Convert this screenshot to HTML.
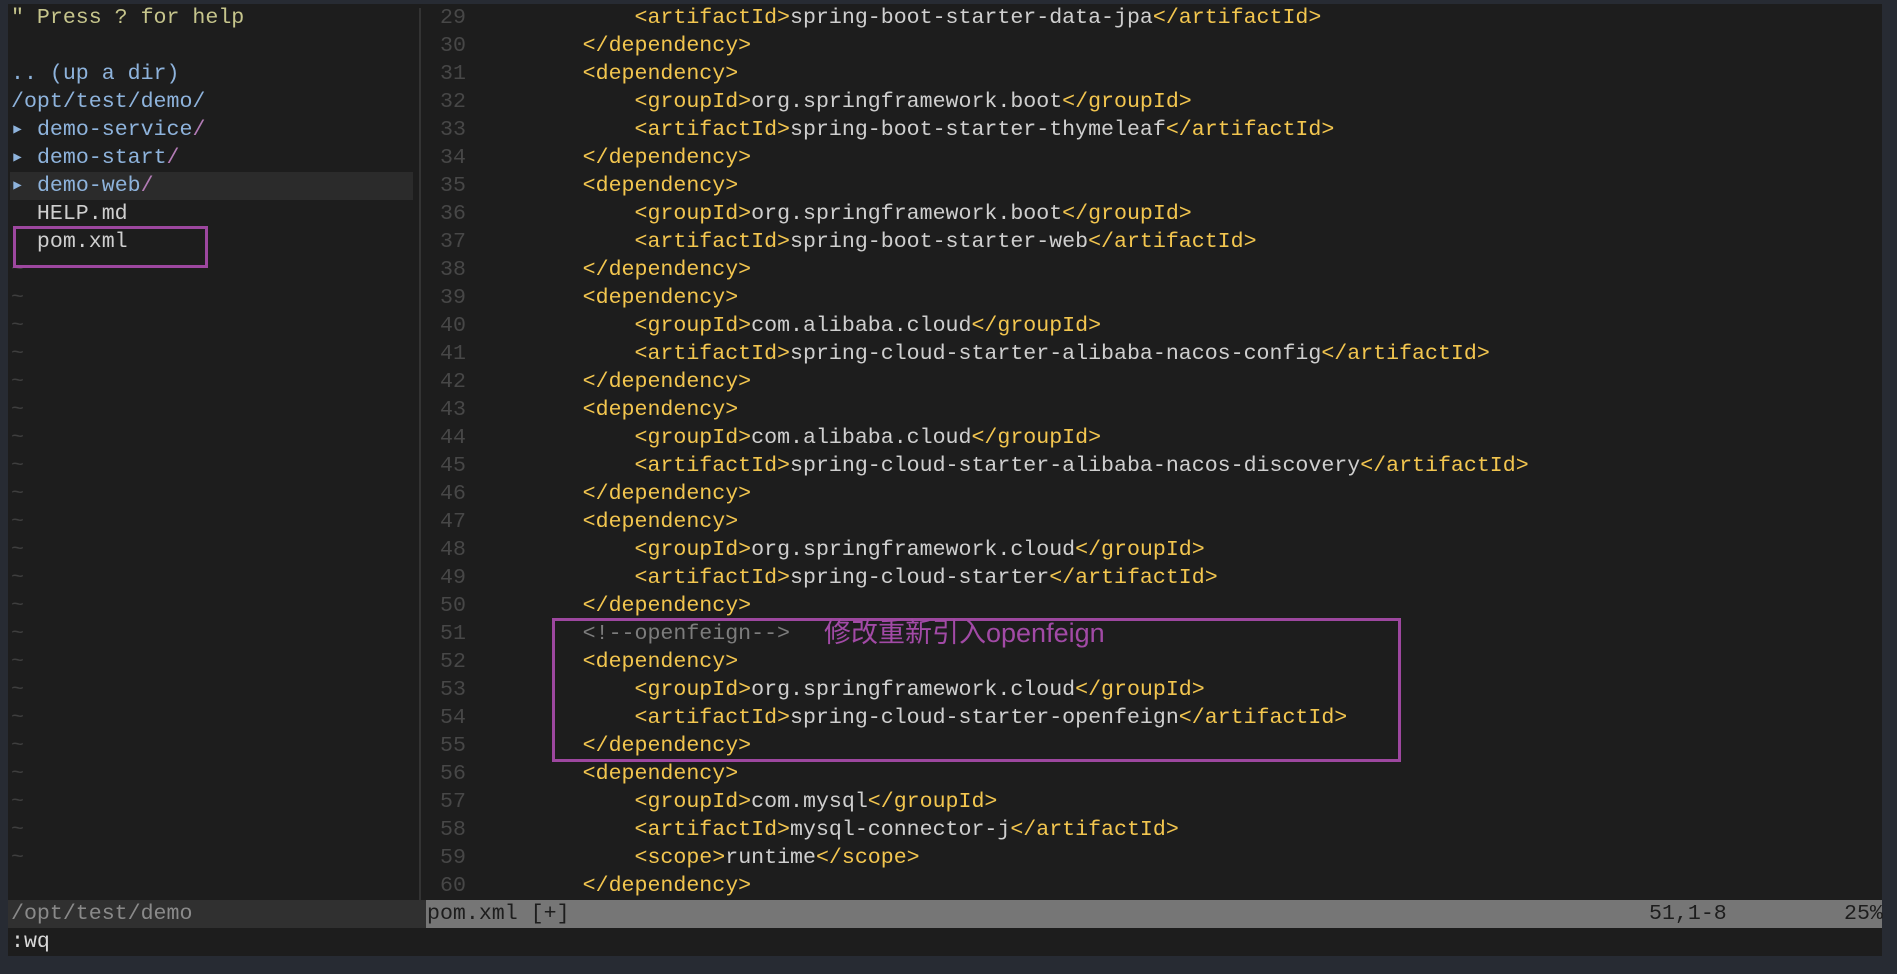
<!DOCTYPE html>
<html><head><meta charset="utf-8"><style>
html,body{margin:0;padding:0;}
body{width:1897px;height:974px;background:#272b33;position:relative;overflow:hidden;font-family:"Liberation Mono","DejaVu Sans Mono",monospace;font-size:21.6px;}
#term{position:absolute;left:8px;top:4px;width:1874px;height:952px;background:#1d1d1d;}
.r{position:absolute;height:28px;line-height:28px;white-space:pre;}
.t{color:#f3c64f}
.v{color:#cfcfcf}
.c{color:#7d7d7d}
.n{color:#474747}
.d{color:#8eb3dc}
.p{color:#b27bb5}
.tl{color:#3e3e3e}
.hl{position:absolute;left:10px;top:172px;width:403px;height:28px;background:#2b2b2b;}
.sep{position:absolute;left:419px;width:2px;background:#333;}
.box{position:absolute;border:3px solid #9d479f;box-sizing:border-box;}
</style></head><body>
<div id="term"></div>
<div class="hl"></div>
<div class="sep" style="top:8px;height:892px"></div>
<div class="r" style="left:11px;top:4px;color:#c6c58c">" Press ? for help</div>
<div class="r d" style="left:11px;top:60px">.. (up a dir)</div>
<div class="r d" style="left:11px;top:88px">/opt/test/demo/</div>
<div class="r" style="left:11px;top:116px"><span class="d">▸ demo-service</span><span class="p">/</span></div>
<div class="r" style="left:11px;top:144px"><span class="d">▸ demo-start</span><span class="p">/</span></div>
<div class="r" style="left:11px;top:172px"><span class="d">▸ demo-web</span><span class="p">/</span></div>
<div class="r v" style="left:11px;top:200px">  HELP.md</div>
<div class="r v" style="left:11px;top:228px">  pom.xml</div>
<div class="r tl" style="left:11px;top:256px;line-height:28px">~<br>~<br>~<br>~<br>~<br>~<br>~<br>~<br>~<br>~<br>~<br>~<br>~<br>~<br>~<br>~<br>~<br>~<br>~<br>~<br>~<br>~</div>
<div class="box" style="left:13px;top:226px;width:195px;height:42px"></div>

<div class="r n" style="left:440px;top:4px;line-height:28px">29<br>30<br>31<br>32<br>33<br>34<br>35<br>36<br>37<br>38<br>39<br>40<br>41<br>42<br>43<br>44<br>45<br>46<br>47<br>48<br>49<br>50<br>51<br>52<br>53<br>54<br>55<br>56<br>57<br>58<br>59<br>60</div>
<div class="r v" style="left:479px;top:4px;line-height:28px">            <span class="t">&lt;artifactId&gt;</span>spring-boot-starter-data-jpa<span class="t">&lt;/artifactId&gt;</span>
        <span class="t">&lt;/dependency&gt;</span>
        <span class="t">&lt;dependency&gt;</span>
            <span class="t">&lt;groupId&gt;</span>org.springframework.boot<span class="t">&lt;/groupId&gt;</span>
            <span class="t">&lt;artifactId&gt;</span>spring-boot-starter-thymeleaf<span class="t">&lt;/artifactId&gt;</span>
        <span class="t">&lt;/dependency&gt;</span>
        <span class="t">&lt;dependency&gt;</span>
            <span class="t">&lt;groupId&gt;</span>org.springframework.boot<span class="t">&lt;/groupId&gt;</span>
            <span class="t">&lt;artifactId&gt;</span>spring-boot-starter-web<span class="t">&lt;/artifactId&gt;</span>
        <span class="t">&lt;/dependency&gt;</span>
        <span class="t">&lt;dependency&gt;</span>
            <span class="t">&lt;groupId&gt;</span>com.alibaba.cloud<span class="t">&lt;/groupId&gt;</span>
            <span class="t">&lt;artifactId&gt;</span>spring-cloud-starter-alibaba-nacos-config<span class="t">&lt;/artifactId&gt;</span>
        <span class="t">&lt;/dependency&gt;</span>
        <span class="t">&lt;dependency&gt;</span>
            <span class="t">&lt;groupId&gt;</span>com.alibaba.cloud<span class="t">&lt;/groupId&gt;</span>
            <span class="t">&lt;artifactId&gt;</span>spring-cloud-starter-alibaba-nacos-discovery<span class="t">&lt;/artifactId&gt;</span>
        <span class="t">&lt;/dependency&gt;</span>
        <span class="t">&lt;dependency&gt;</span>
            <span class="t">&lt;groupId&gt;</span>org.springframework.cloud<span class="t">&lt;/groupId&gt;</span>
            <span class="t">&lt;artifactId&gt;</span>spring-cloud-starter<span class="t">&lt;/artifactId&gt;</span>
        <span class="t">&lt;/dependency&gt;</span>
        <span class="c">&lt;!--openfeign--&gt;</span>
        <span class="t">&lt;dependency&gt;</span>
            <span class="t">&lt;groupId&gt;</span>org.springframework.cloud<span class="t">&lt;/groupId&gt;</span>
            <span class="t">&lt;artifactId&gt;</span>spring-cloud-starter-openfeign<span class="t">&lt;/artifactId&gt;</span>
        <span class="t">&lt;/dependency&gt;</span>
        <span class="t">&lt;dependency&gt;</span>
            <span class="t">&lt;groupId&gt;</span>com.mysql<span class="t">&lt;/groupId&gt;</span>
            <span class="t">&lt;artifactId&gt;</span>mysql-connector-j<span class="t">&lt;/artifactId&gt;</span>
            <span class="t">&lt;scope&gt;</span>runtime<span class="t">&lt;/scope&gt;</span>
        <span class="t">&lt;/dependency&gt;</span></div>

<div class="box" style="left:552px;top:618px;width:849px;height:144px"></div>
<div class="r" style="left:824px;top:617px;height:32px;line-height:32px;color:#a24aa6;font-family:'Liberation Sans','Noto Sans CJK SC',sans-serif;font-size:27px">修改重新引入openfeign</div>

<div style="position:absolute;left:8px;top:900px;width:418px;height:28px;background:#303030"></div>
<div style="position:absolute;left:426px;top:900px;width:1456px;height:28px;background:#767676"></div>
<div class="r" style="left:11px;top:900px;color:#8a8a8a">/opt/test/demo</div>
<div class="r" style="left:427px;top:900px;color:#1d1d1d">pom.xml [+]</div>
<div class="r" style="left:1649px;top:900px;color:#1d1d1d">51,1-8</div>
<div class="r" style="left:1844px;top:900px;color:#1d1d1d">25%</div>
<div class="r" style="left:11px;top:928px;color:#d8d8d8">:wq</div>
</body></html>
